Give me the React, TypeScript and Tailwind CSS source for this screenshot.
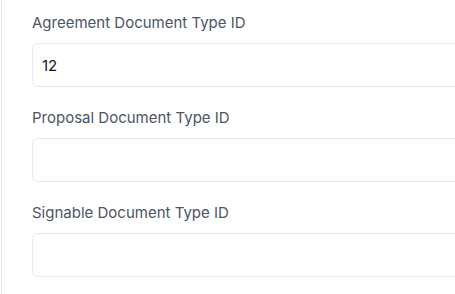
import React from 'react';

const fields = [
  { label: 'Agreement Document Type ID', value: '12' },
  { label: 'Proposal Document Type ID', value: '' },
  { label: 'Signable Document Type ID', value: '' }
];

export default function App() {
  return (
    <div className="h-[294px] w-[455px] overflow-hidden bg-white font-['Inter',sans-serif]">
      <div className="ml-px h-full border-l border-gray-200 pl-[30px] pt-[12px]">
        <div className="flex w-[460px] flex-col gap-[20px]">
          {fields.map((f) => (
            <div key={f.label} className="flex flex-col">
              <label className="mb-[10px] text-[15px] leading-[21px] text-[#4b5563]">
                {f.label}
              </label>
              <input
                type="text"
                defaultValue={f.value}
                className="h-[44px] w-full rounded-md border border-gray-200 bg-white px-[9px] text-[15px] text-[#111827] outline-none"
              />
            </div>
          ))}
        </div>
      </div>
    </div>
  );
}
